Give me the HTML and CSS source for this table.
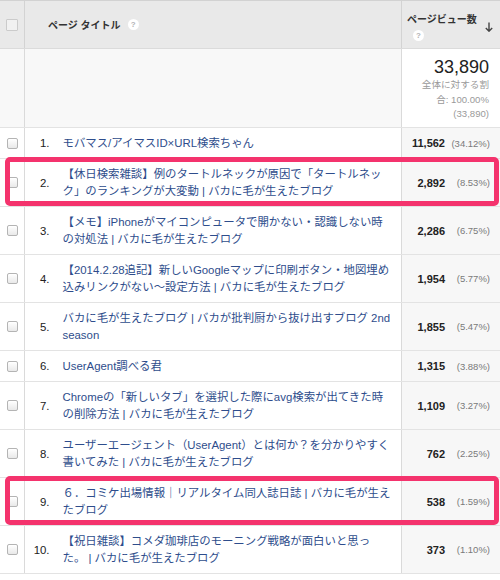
FILE: index.html
```html
<!DOCTYPE html>
<html lang="ja">
<head>
<meta charset="utf-8">
<title>ページ タイトル</title>
<link rel="stylesheet" href="styles.css">
</head>
<body>
<div class="report">
  <div class="row row-head">
    <div class="cell c-check"><span class="box box-head"></span></div>
    <div class="cell c-head-title">ページ タイトル<span class="help">?</span></div>
    <div class="cell c-head-metric">
      <div class="metric-label">ページビュー数<span class="help">?</span></div>
      <svg class="sort-arrow" width="8" height="10" viewBox="0 0 8 10"><path d="M4 0.5V9.2M0.8 5.9L4 9.2 7.2 5.9" fill="none" stroke="#444" stroke-width="1.4"/></svg>
    </div>
  </div>
  <div class="row row-total">
    <div class="cell c-check"></div>
    <div class="cell c-total-blank"></div>
    <div class="cell c-total">
      <div class="total-value">33,890</div>
      <div class="total-note">全体に対する割<br>合: 100.00%<br>(33,890)</div>
    </div>
  </div>

  <div class="row">
    <div class="cell c-check"><span class="box"></span></div>
    <div class="cell c-index">1.</div>
    <div class="cell c-title"><a>モバマス/アイマスID×URL検索ちゃん</a></div>
    <div class="cell c-value"><b>11,562</b><span class="pct">(34.12%)</span></div>
  </div>
  <div class="row is-flagged">
    <div class="cell c-check"><span class="box"></span></div>
    <div class="cell c-index">2.</div>
    <div class="cell c-title"><a>【休日検索雑談】例のタートルネックが原因で「タートルネッ<br>ク」のランキングが大変動 | バカに毛が生えたブログ</a></div>
    <div class="cell c-value"><b>2,892</b><span class="pct">(8.53%)</span></div>
  </div>
  <div class="row">
    <div class="cell c-check"><span class="box"></span></div>
    <div class="cell c-index">3.</div>
    <div class="cell c-title"><a>【メモ】iPhoneがマイコンピュータで開かない・認識しない時<br>の対処法 | バカに毛が生えたブログ</a></div>
    <div class="cell c-value"><b>2,286</b><span class="pct">(6.75%)</span></div>
  </div>
  <div class="row">
    <div class="cell c-check"><span class="box"></span></div>
    <div class="cell c-index">4.</div>
    <div class="cell c-title"><a>【2014.2.28追記】新しいGoogleマップに印刷ボタン・地図埋め<br>込みリンクがない〜設定方法 | バカに毛が生えたブログ</a></div>
    <div class="cell c-value"><b>1,954</b><span class="pct">(5.77%)</span></div>
  </div>
  <div class="row">
    <div class="cell c-check"><span class="box"></span></div>
    <div class="cell c-index">5.</div>
    <div class="cell c-title"><a>バカに毛が生えたブログ | バカが批判厨から抜け出すブログ 2nd<br><span class="latin-line">season</span></a></div>
    <div class="cell c-value"><b>1,855</b><span class="pct">(5.47%)</span></div>
  </div>
  <div class="row">
    <div class="cell c-check"><span class="box"></span></div>
    <div class="cell c-index">6.</div>
    <div class="cell c-title"><a>UserAgent調べる君</a></div>
    <div class="cell c-value"><b>1,315</b><span class="pct">(3.88%)</span></div>
  </div>
  <div class="row">
    <div class="cell c-check"><span class="box"></span></div>
    <div class="cell c-index">7.</div>
    <div class="cell c-title"><a>Chromeの「新しいタブ」を選択した際にavg検索が出てきた時<br>の削除方法 | バカに毛が生えたブログ</a></div>
    <div class="cell c-value"><b>1,109</b><span class="pct">(3.27%)</span></div>
  </div>
  <div class="row">
    <div class="cell c-check"><span class="box"></span></div>
    <div class="cell c-index">8.</div>
    <div class="cell c-title"><a>ユーザーエージェント（UserAgent）とは何か？を分かりやすく<br>書いてみた | バカに毛が生えたブログ</a></div>
    <div class="cell c-value"><b>762</b><span class="pct">(2.25%)</span></div>
  </div>
  <div class="row is-flagged">
    <div class="cell c-check"><span class="box"></span></div>
    <div class="cell c-index">9.</div>
    <div class="cell c-title"><a>６．コミケ出場情報｜リアルタイム同人誌日誌 | バカに毛が生え<br>たブログ</a></div>
    <div class="cell c-value"><b>538</b><span class="pct">(1.59%)</span></div>
  </div>
  <div class="row">
    <div class="cell c-check"><span class="box"></span></div>
    <div class="cell c-index">10.</div>
    <div class="cell c-title"><a>【祝日雑談】コメダ珈琲店のモーニング戦略が面白いと思っ<br>た。 | バカに毛が生えたブログ</a></div>
    <div class="cell c-value"><b>373</b><span class="pct">(1.10%)</span></div>
  </div>
</div>
</body>
</html>
```
FILE: styles.css
```css
* {
  box-sizing: border-box;
  margin: 0;
  padding: 0;
}

body {
  background: #fff;
  font-family: "Liberation Sans", "Noto Sans CJK JP", sans-serif;
  color: #222;
}

.report {
  width: 500px;
  border-top: 1px solid #d2d2d2;
}

.row {
  position: relative;
  display: grid;
  grid-template-columns: 25px 27px 350px 98px;
  border-bottom: 1px solid #e3e3e3;
}

.cell {
  display: flex;
  align-items: center;
}

.c-check {
  justify-content: center;
  border-right: 1px solid #dadada;
}

.box {
  display: block;
  width: 11px;
  height: 11px;
  border: 1px solid #b4b4b4;
  border-radius: 2px;
  background: linear-gradient(#ffffff, #e9e9e9);
  box-shadow: inset 0 1px 0 #fff;
}

/* header */
.row-head {
  height: 48px;
  background: #e9e9e9;
  border-bottom: 1px solid #dbdbdb;
}

.row-head .c-check {
  border-right-color: #d3d3d3;
}

.box-head {
  border-radius: 1px;
  border-color: #cbcbcb;
  background: #f1f1f1;
  box-shadow: none;
  width: 12px;
  height: 12px;
}

.c-head-title {
  grid-column: 2 / 4;
  padding-left: 23px;
  font-size: 10px;
  font-weight: bold;
  color: #333;
  border-right: 1px solid #d3d3d3;
}

.help {
  display: inline-flex;
  align-items: center;
  justify-content: center;
  width: 11px;
  height: 11px;
  margin-left: 7px;
  border-radius: 50%;
  background: #fff;
  color: #b3b3b3;
  font-family: "Liberation Sans", sans-serif;
  font-size: 8px;
  font-weight: bold;
}

.c-head-metric {
  align-items: flex-start;
  justify-content: space-between;
  padding: 10px 7px 0 5px;
}

.metric-label {
  display: flex;
  flex-direction: column;
  align-items: flex-start;
  font-size: 10px;
  font-weight: bold;
  color: #333;
}

.metric-label .help {
  margin: 4px 0 0 6px;
}

.sort-arrow {
  margin-top: 11px;
}

/* total row */
.row-total {
  height: 79px;
}

.row-total .c-check,
.c-total-blank {
  background: #f8f8f8;
}

.c-total-blank {
  grid-column: 2 / 4;
  border-right: 1px solid #dadada;
}

.c-total {
  flex-direction: column;
  align-items: flex-end;
  justify-content: flex-start;
  padding: 8px 11px 0 0;
  text-align: right;
}

.total-value {
  font-size: 18px;
  color: #222;
}

.total-note {
  font-size: 9.6px;
  line-height: 14.6px;
  color: #9a9a9a;
}

/* data rows */
.c-index {
  justify-content: flex-end;
  padding-right: 2.5px;
  font-size: 11.4px;
  color: #222;
}

.c-title {
  padding: 6.5px 4px 6.5px 10.5px;
  border-right: 1px solid #dadada;
  font-size: 11.4px;
  line-height: 17px;
  white-space: nowrap;
}

.c-title a {
  color: #2e4d8c;
  text-decoration: none;
}

.latin-line {
  display: inline-block;
  line-height: 14px;
}

.c-value {
  justify-content: flex-end;
  padding-right: 10px;
  background: #f7f7f7;
}

.c-value b {
  font-size: 11px;
  font-weight: bold;
  color: #222;
}

.pct {
  width: 45px;
  text-align: right;
  font-size: 9.5px;
  color: #7a7a7a;
}

.is-flagged::after {
  content: "";
  position: absolute;
  z-index: 1;
  top: -2px;
  bottom: 0;
  left: 5px;
  right: 1px;
  border: 5px solid #f4336d;
  border-radius: 5px;
  pointer-events: none;
}
```
